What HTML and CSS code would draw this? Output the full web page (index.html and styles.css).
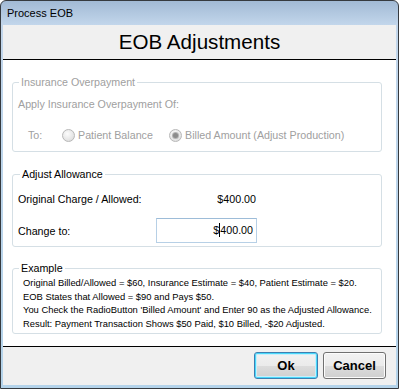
FILE: index.html
```html
<!DOCTYPE html>
<html lang="en">
<head>
    <meta charset="UTF-8">
    <meta name="viewport" content="width=device-width, initial-scale=1.0">
    <title>Process EOB</title>
    <link rel="stylesheet" href="styles.css">
</head>
<body>

    <div class="window">
        <div class="titlebar">Process EOB</div>

        <div class="client">
            <div class="header">EOB Adjustments</div>

            <div class="content">
                <fieldset class="group disabled">
                    <legend>Insurance Overpayment</legend>
                    <div class="line">Apply Insurance Overpayment Of:</div>
                    <div class="radio-row">
                        <span class="to-label">To:</span>
                        <span class="option first"><span class="radio"></span>Patient Balance</span>
                        <span class="option"><span class="radio checked"></span>Billed Amount (Adjust Production)</span>
                    </div>
                </fieldset>

                <fieldset class="group allowance">
                    <legend>Adjust Allowance</legend>
                    <div class="field-row">
                        <span class="field-label">Original Charge / Allowed:</span>
                        <span class="field-value">$400.00</span>
                    </div>
                    <div class="field-row second">
                        <span class="field-label">Change to:</span>
                        <div class="textbox">$<span class="caret"></span>400.00</div>
                    </div>
                </fieldset>

                <fieldset class="group example">
                    <legend>Example</legend>
                    <p>Original Billed/Allowed = $60, Insurance Estimate = $40, Patient Estimate = $20.</p>
                    <p>EOB States that Allowed = $90 and Pays $50.</p>
                    <p>You Check the RadioButton 'Billed Amount' and Enter 90 as the Adjusted Allowance.</p>
                    <p>Result: Payment Transaction Shows $50 Paid, $10 Billed, -$20 Adjusted.</p>
                </fieldset>
            </div>

            <div class="footer">
                <button class="btn default">Ok</button>
                <button class="btn">Cancel</button>
            </div>
        </div>
    </div>

</body>
</html>
```

FILE: styles.css
```css
* {
    margin: 0;
    padding: 0;
    box-sizing: border-box;
}

body {
    font-family: 'Liberation Sans', Arial, sans-serif;
    font-size: 10.7px;
    color: #000;
    background: #fff;
}

.window {
    width: 399px;
    height: 389px;
    border: 1px solid #363a3f;
    border-radius: 6px 6px 0 0;
    background: linear-gradient(to bottom, #a2bad5 0, #c2d6eb 24px, #b4d3ea 100%);
    display: flex;
    flex-direction: column;
}

.titlebar {
    height: 24px;
    padding: 6px 0 0 6px;
    font-size: 11px;
    color: #000;
}

.client {
    margin: 0 2px 3px 2px;
    flex: 1;
    display: flex;
    flex-direction: column;
    background: #fff;
}

.header {
    height: 35px;
    background: #f0f0f0;
    border-bottom: 1px solid #000;
    display: flex;
    align-items: center;
    justify-content: center;
    font-size: 20.6px;
    padding-bottom: 1px;
}

.content {
    height: 286px;
    padding: 0 14px 0 9px;
}

/* group boxes */
.group {
    border: 1px solid #d5dfe5;
    border-radius: 3px;
    padding: 0 5px;
}

.group legend {
    line-height: 13px;
    padding: 0 2px;
    margin-left: 1px;
}

.disabled {
    margin-top: 16px;
    padding-top: 8px;
    padding-bottom: 9px;
    color: #a0a0a0;
}

.line {
    line-height: 14px;
}

.radio-row {
    margin-top: 17px;
    height: 14px;
    display: flex;
    align-items: center;
}

.to-label {
    margin-left: 10px;
    width: 34px;
}

.option {
    display: flex;
    align-items: center;
    gap: 3px;
}

.option.first {
    width: 107px;
}

.radio {
    width: 13px;
    height: 13px;
    border-radius: 50%;
    border: 1px solid #b8b8b8;
    background: radial-gradient(circle at 40% 35%, #fcfcfc 0, #e6e6e6 60%, #d4d4d4 100%);
    display: flex;
    align-items: center;
    justify-content: center;
}

.radio.checked::after {
    content: "";
    width: 5px;
    height: 5px;
    border-radius: 50%;
    background: #8c8c8c;
    box-shadow: 0 0 0 1px #b4b4b4;
}

.allowance {
    margin-top: 16px;
    padding-top: 11px;
    padding-bottom: 3px;
}

.allowance legend {
    margin-left: 2px;
}

.field-row {
    display: flex;
    align-items: center;
    height: 14px;
}

.field-row.second {
    margin-top: 12px;
    height: 25px;
}

.field-label {
    width: 138px;
}

.field-value {
    width: 101px;
    text-align: right;
    padding-right: 1px;
}

.textbox {
    width: 101px;
    height: 25px;
    border: 1px solid #b7d0e6;
    border-top-color: #9dbcd8;
    text-align: right;
    padding-right: 3px;
    line-height: 22px;
}

.caret {
    display: inline-block;
    width: 1px;
    height: 14px;
    background: #000;
    vertical-align: -3px;
}

.example {
    margin-top: 15px;
    padding-top: 1px;
    padding-bottom: 2px;
    padding-left: 10px;
}

.example legend {
    margin-left: -4px;
}

.example p {
    font-size: 9.4px;
    line-height: 13.67px;
}

/* footer buttons */
.footer {
    height: 39px;
    background: #f0f0f0;
    border-top: 1px solid #000;
    display: flex;
    justify-content: flex-end;
    align-items: flex-start;
    gap: 5px;
    padding: 5px 10px 0 0;
}

.btn {
    height: 27px;
    width: 63px;
    font-family: 'Liberation Sans', Arial, sans-serif;
    font-size: 13px;
    font-weight: bold;
    color: #000;
    border: 1px solid #707070;
    border-radius: 3px;
    background: linear-gradient(to bottom, #f2f2f2 0, #ebebeb 50%, #dddddd 50%, #cfcfcf 100%);
    box-shadow: inset 0 0 0 1px #fcfcfc;
}

.btn.default {
    width: 64px;
    border-color: #3c7fb1;
    box-shadow: inset 0 0 0 1px #48d8fb, inset 0 0 0 2px #c7eefb;
}
```
